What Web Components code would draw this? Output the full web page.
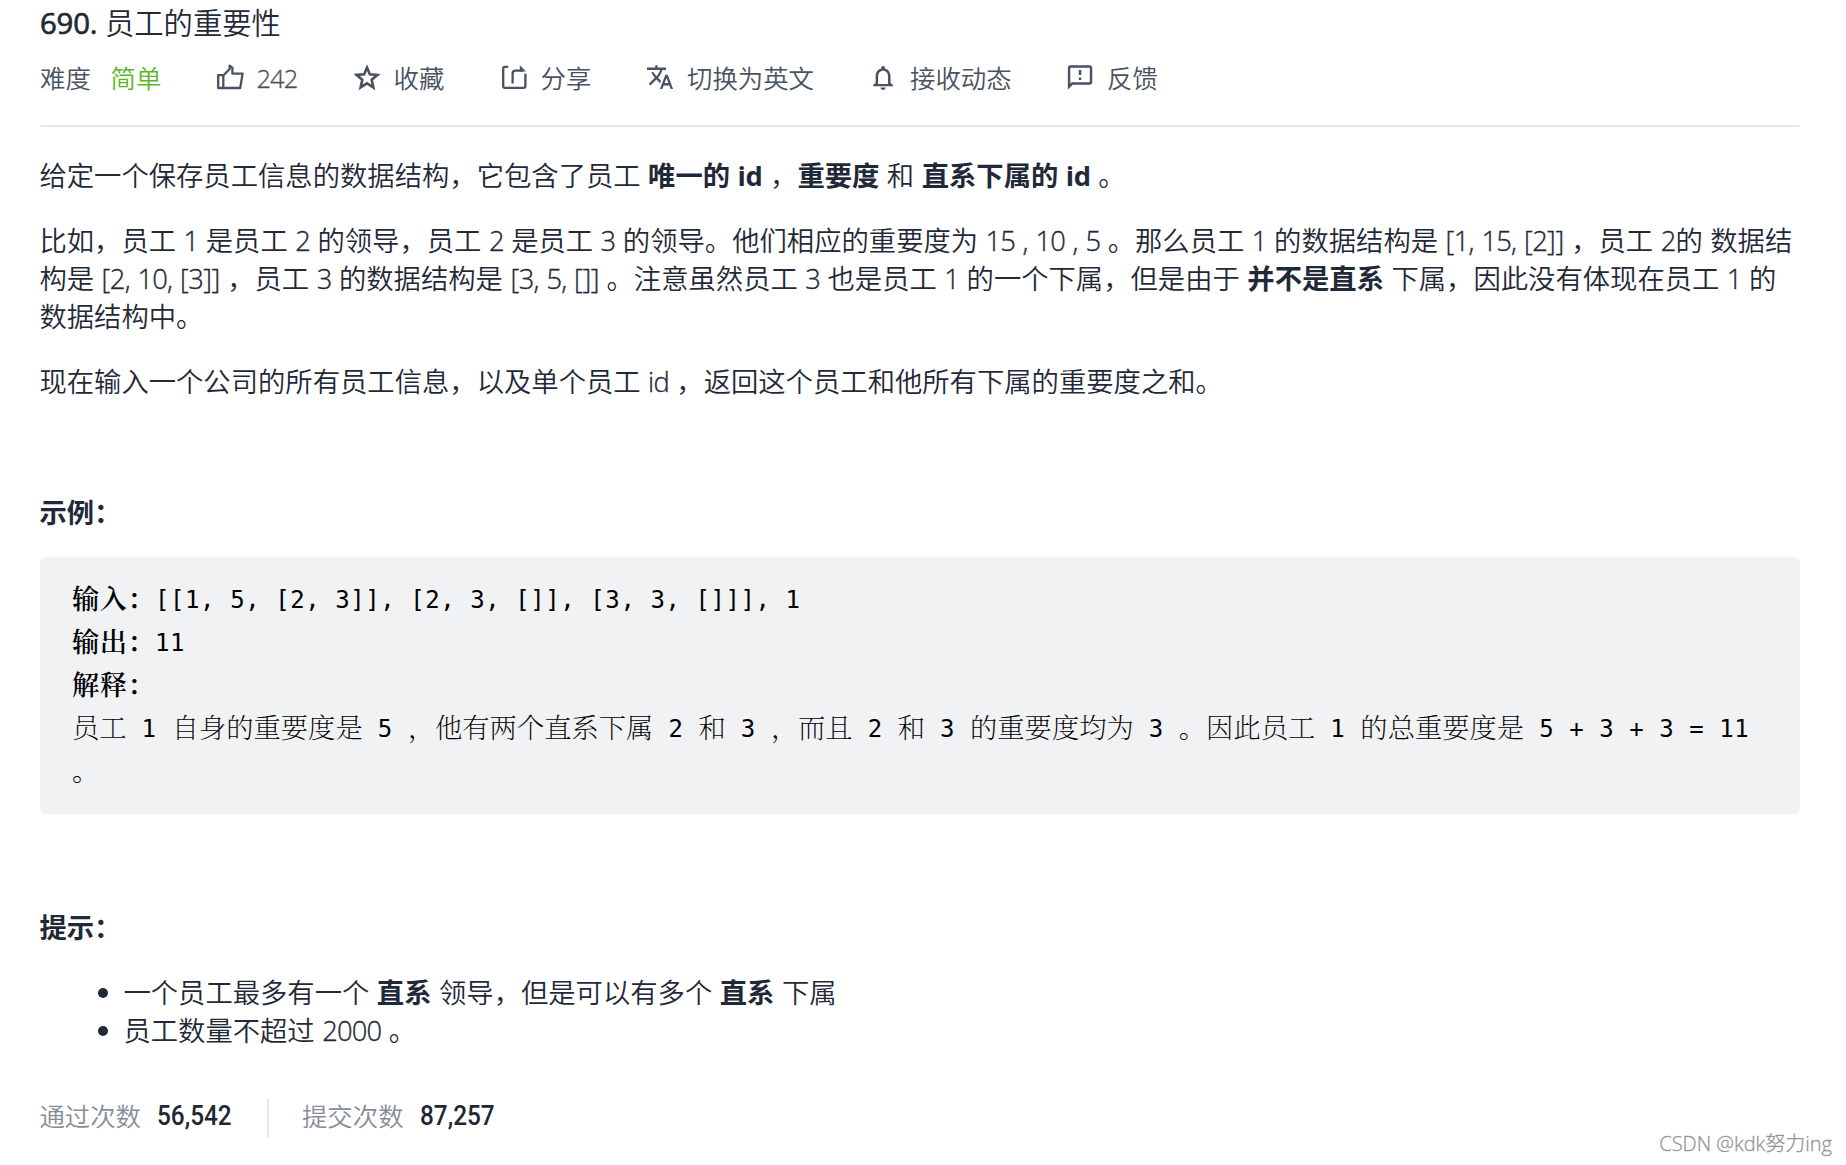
<!DOCTYPE html>
<html lang="zh-CN">
<head>
<meta charset="utf-8">
<title>690. 员工的重要性</title>
<style>
html,body{margin:0;background:#fff}
body{width:1846px;height:1165px;overflow:hidden;position:relative}
</style>
</head>
<body>
<problem-page></problem-page>
<script>
const ICONS = {
  like: '<path d="M1.2 11.2H6.3V24H1.2zM6.3 11.5L12.6 5V1.6L15.4 3.6V9.6H25.6L23.2 24H6.3"/>',
  star: '<path stroke-width="2.6" stroke-linejoin="miter" d="M13 3.6L15.8 10.2L23.4 10.9L17.7 15.7L19.4 23.4L13 19.4L6.6 23.4L8.3 15.7L2.6 10.9L10.2 10.2Z"/>',
  share: '<path d="M7.2 2.8H4Q2.2 2.8 2.2 4.6V22Q2.2 23.8 4 23.8H22.6Q24.4 23.8 24.4 22V9.8M11.6 19.6V9.5Q11.6 6.6 14.5 6.6H22"/><path d="M18.8 1.2L25 7.6H18.8Z" fill="currentColor" stroke="none"/>',
  lang: '<g transform="translate(-1.3 -1.2) scale(1.19)"><path fill="currentColor" stroke="none" d="M12.87 15.07l-2.54-2.51.03-.03c1.74-1.94 2.98-4.17 3.71-6.53H17V4h-7V2H8v2H1v1.99h11.17C11.5 7.92 10.44 9.75 9 11.35 8.07 10.32 7.3 9.19 6.69 8h-2c.73 1.63 1.73 3.17 2.98 4.56l-5.09 5.02L4 19l5-5 3.11 3.11.76-2.04zM18.5 10h-2L12 22h2l1.12-3h4.75L21 22h2l-4.5-12zm-2.62 7l1.62-4.33L19.12 17h-3.24z"/></g>',
  bell: '<g transform="translate(-1.8 -1.2) scale(1.24)"><path fill="currentColor" stroke="none" d="M12 22c1.1 0 2-.9 2-2h-4c0 1.1.9 2 2 2zm6-6v-5c0-3.07-1.63-5.64-4.5-6.32V4c0-.83-.67-1.5-1.5-1.5s-1.5.67-1.5 1.5v.68C7.64 5.36 6 7.92 6 11v5l-2 2v1h16v-1l-2-2zm-2 1H8v-6c0-2.48 1.51-4.5 4-4.5s4 2.02 4 4.5v6z"/></g>',
  feedback: '<g transform="translate(-1.6 -1.2) scale(1.22)"><path fill="currentColor" stroke="none" d="M20 2H4c-1.1 0-1.99.9-1.99 2L2 22l4-4h14c1.1 0 2-.9 2-2V4c0-1.1-.9-2-2-2zm0 14H5.17l-.59.59-.58.58V4h16v12zm-9-4h2v2h-2zm0-6h2v4h-2z"/></g>'
};
const BASE = ':host{display:block;font-family:"Open Sans","Noto Sans CJK SC",sans-serif}.l{letter-spacing:-.031em;word-spacing:.045em;-webkit-text-stroke:.35px currentColor}.l i{font-style:normal;letter-spacing:-.015em}b .l{letter-spacing:-.012em;word-spacing:.026em;-webkit-text-stroke:0}b{font-weight:700}';
function latin(html){
  return html.split(/(<[^>]+>)/).map(p => p[0]==='<' ? p : p.replace(/[\x20-\x7e]+/g, m => `<span class="l">${m.replace(/[\[\],]+/g,'<i>$&</i>')}</span>`)).join('');
}
class Base extends HTMLElement {
  constructor(){ super(); this.attachShadow({mode:'open'}); }
  connectedCallback(){ this.shadowRoot.innerHTML = `<style>${BASE}${this.css()}</style>${this.view()}`; }
}
customElements.define('meta-action', class extends Base {
  css(){ return ':host{display:flex;align-items:center}svg{width:28px;height:28px;margin-right:12px;margin-top:-1px;fill:none;stroke:currentColor;stroke-width:2.3;stroke-linejoin:round;flex:none}'; }
  view(){ return `<svg viewBox="0 0 28 28">${ICONS[this.getAttribute('icon')]}</svg><slot></slot>`; }
});
customElements.define('rich-text', class extends Base {
  css(){ return ':host{line-height:38px;font-size:27.34px;white-space:pre;font-weight:350;margin-left:-.6px}'; }
  view(){ return latin(this.innerHTML); }
});
customElements.define('problem-header', class extends Base {
  css(){ return `:host{border-bottom:2px solid #e5e5ea;height:125px}
  h1{margin:0;height:46px;font-size:29.3px;line-height:46px;font-weight:350;white-space:pre}
  h1 b{font-weight:400;letter-spacing:-.005em;-webkit-text-stroke:.7px currentColor}
  nav{display:flex;height:64px;align-items:center;font-size:25.4px;line-height:64px;font-weight:350;color:#485260;white-space:pre}
  nav>*{flex:none}.n{letter-spacing:-.035em;-webkit-text-stroke:.35px currentColor}`; }
  view(){ return `<h1><b>690.</b> 员工的重要性</h1><nav>
  <span style="width:70.5px">难度</span><span style="width:106px;color:#5ab726">简单</span>
  <meta-action icon="like" style="width:137px"><span class="n">242</span></meta-action>
  <meta-action icon="star" style="width:147px">收藏</meta-action>
  <meta-action icon="share" style="width:146.5px">分享</meta-action>
  <meta-action icon="lang" style="width:223px">切换为英文</meta-action>
  <meta-action icon="bell" style="width:197px">接收动态</meta-action>
  <meta-action icon="feedback">反馈</meta-action></nav>`.replace(/>\s*\n\s*</g,'><'); }
});
customElements.define('code-example', class extends Base {
  css(){ return `:host{background:#f1f2f4;border-radius:6px;height:215px;padding:19px 32px 23px;color:#000}
  pre{margin:0;font:200 27.3px/43px "Noto Serif CJK SC","Noto Sans CJK SC",monospace}
  b{font-weight:600;letter-spacing:.4px}
  .m{font:400 24px/1 "DejaVu Sans Mono","Liberation Mono",monospace;letter-spacing:.56px;vertical-align:1px}`; }
  view(){ return '<pre>'+this.innerHTML.split(/(<[^>]+>)/).map(p=>p[0]==='<'?p:p.replace(/[\x20-\x7e]+/g,m=>`<span class="m">${m}</span>`)).join('')+'</pre>'; }
});
customElements.define('hint-list', class extends Base {
  css(){ return 'ul{margin:0;padding:0;list-style:none}li{display:flex;align-items:center}li::before{content:"";width:10px;height:10px;border-radius:50%;background:currentColor;margin:0 16px 0 58px}'; }
  view(){ return '<ul><li><rich-text>一个员工最多有一个 <b>直系</b> 领导，但是可以有多个 <b>直系</b> 下属</rich-text></li><li><rich-text>员工数量不超过 2000 。</rich-text></li></ul>'; }
});
customElements.define('submit-stat', class extends Base {
  css(){ return ':host{display:flex;align-items:center;height:38px;font-size:25.4px;line-height:34px;font-weight:350;color:#868d99}span{padding-bottom:4px;margin-left:-.6px}b{font:500 28px/34px Roboto,sans-serif;color:#1f2733;width:75.6px;margin-left:16px;padding-bottom:5px;white-space:nowrap}i{display:block;font-style:normal;transform:scaleX(.87);transform-origin:0 50%}'; }
  view(){ return `<span>${this.getAttribute('label')}</span><b><i>${this.getAttribute('value')}</i></b>`; }
});
customElements.define('page-mark', class extends Base {
  css(){ return ':host{position:absolute;right:14px;bottom:8px;font-size:20px;line-height:26px;color:#959595;font-weight:300;-webkit-text-stroke:.3px currentColor;white-space:nowrap}'; }
  view(){ return '<slot></slot>'; }
});
customElements.define('problem-page', class extends Base {
  css(){ return `:host{color:#1f2937}
  main{display:flex;flex-direction:column;padding:0 46px 0 40px}
  .p1{margin-top:30px}.p2{margin-top:27px}.p3{margin-top:27px}.ex{margin-top:93px}
  code-example{margin-top:25px}.hint{margin-top:95px}hint-list{margin-top:27px}
  footer{display:flex;margin-top:49px}hr{margin:0 34px;border:0;width:2px;height:38px;background:#e5e5ea}`; }
  view(){ return `<main>
  <problem-header></problem-header>
  <rich-text class="p1">给定一个保存员工信息的数据结构，它包含了员工 <b>唯一的 id</b> ，<b>重要度</b> 和 <b>直系下属的 id</b> 。</rich-text>
  <rich-text class="p2">比如，员工 1 是员工 2 的领导，员工 2 是员工 3 的领导。他们相应的重要度为 15 , 10 , 5 。那么员工 1 的数据结构是 [1, 15, [2]] ，员工 2的 数据结<br>构是 [2, 10, [3]] ，员工 3 的数据结构是 [3, 5, []] 。注意虽然员工 3 也是员工 1 的一个下属，但是由于 <b>并不是直系</b> 下属，因此没有体现在员工 1 的<br>数据结构中。</rich-text>
  <rich-text class="p3">现在输入一个公司的所有员工信息，以及单个员工 id ，返回这个员工和他所有下属的重要度之和。</rich-text>
  <rich-text class="ex"><b>示例：</b></rich-text>
  <code-example><b>输入：</b>[[1, 5, [2, 3]], [2, 3, []], [3, 3, []]], 1
<b>输出：</b>11
<b>解释：</b>
员工 1 自身的重要度是 5 ，他有两个直系下属 2 和 3 ，而且 2 和 3 的重要度均为 3 。因此员工 1 的总重要度是 5 + 3 + 3 = 11
。</code-example>
  <rich-text class="hint"><b>提示：</b></rich-text>
  <hint-list></hint-list>
  <footer><submit-stat label="通过次数" value="56,542"></submit-stat><hr><submit-stat label="提交次数" value="87,257"></submit-stat></footer>
  </main><page-mark>CSDN @kdk努力ing</page-mark>`; }
});
</script>
</body>
</html>
